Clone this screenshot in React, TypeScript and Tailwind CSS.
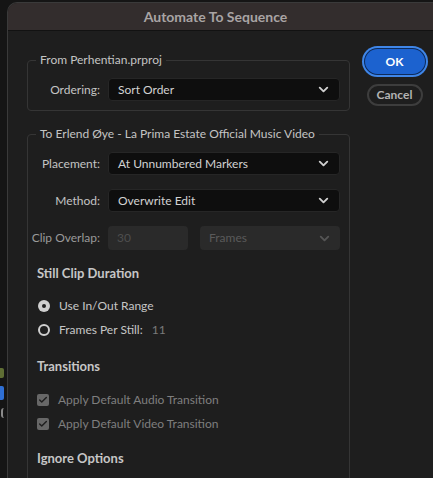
import { ChevronDown, Check } from 'lucide-react';

const font = { fontFamily: 'Lato, "Open Sans", sans-serif' };

interface SelectProps {
  value: string;
  disabled?: boolean;
  className?: string;
}

const Select = ({ value, disabled, className = '' }: SelectProps) => (
  <div
    className={`h-[23px] flex items-center justify-between rounded-[4px] pl-[9px] pr-[8px] text-[12px] ${
      disabled
        ? 'bg-[#2a2a2a] text-[#5a5a5a]'
        : 'bg-[#0e0e0e] border border-[#262626] text-[#d2d2d2]'
    } ${className}`}
  >
    <span>{value}</span>
    <ChevronDown size={15} strokeWidth={3} className={disabled ? 'text-[#555]' : 'text-[#cfcfcf]'} />
  </div>
);

const Row = ({ label, children, dim }: { label: string; children: React.ReactNode; dim?: boolean }) => (
  <div className="flex items-center">
    <div className={`w-[72px] shrink-0 text-right text-[12px] ${dim ? 'text-[#9a9a9a]' : 'text-[#c4c4c4]'}`}>{label}</div>
    <div className="flex-1 ml-[8px] flex gap-[12px]">{children}</div>
  </div>
);

const Radio = ({ checked, label, extra }: { checked?: boolean; label: string; extra?: string }) => (
  <div className="flex items-center h-[16px]">
    {checked ? (
      <span className="w-[12px] h-[12px] rounded-full bg-[#cfcfcf] flex items-center justify-center">
        <span className="w-[4px] h-[4px] rounded-full bg-[#1e1e1e]" />
      </span>
    ) : (
      <span className="w-[12px] h-[12px] rounded-full border-[2.5px] border-[#cfcfcf]" />
    )}
    <span className="ml-[9px] text-[12px] text-[#c6c6c6]">{label}</span>
    {extra && <span className="ml-[9px] text-[12px] text-[#7a7a7a]">{extra}</span>}
  </div>
);

const Checkbox = ({ label }: { label: string }) => (
  <div className="flex items-center h-[16px]">
    <span className="w-[12px] h-[12px] rounded-[2px] bg-[#676767] flex items-center justify-center">
      <Check size={10} strokeWidth={3.5} className="text-[#1f1f1f]" />
    </span>
    <span className="ml-[9px] text-[12px] text-[#7f7f7f]">{label}</span>
  </div>
);

export default function App() {
  return (
    <div className="w-[433px] h-[478px] bg-[#151515] overflow-hidden flex" style={font}>
      {/* app behind the dialog */}
      <div className="w-[7px] shrink-0 flex flex-col">
        <div className="h-[368px]" />
        <div className="w-[4px] h-[10px] bg-[#5f6e34] rounded-r-[2px]" />
        <div className="h-[8px]" />
        <div className="w-[4px] h-[14px] bg-[#2f6fd4] rounded-r-[2px]" />
        <div className="h-[8px]" />
        <div className="w-[3px] h-[10px] border-l-2 border-[#8a8a8a] rounded-l-full ml-[1px]" />
      </div>

      {/* dialog */}
      <div className="flex-1 mt-[2px] rounded-tl-[10px] border-l border-t border-[#3a3a3a] bg-[#1e1e1e] flex flex-col overflow-hidden">
        <div className="h-[28px] shrink-0 bg-[#332d2d] border-b border-[#121212] flex items-center justify-center pr-[10px]">
          <span className="text-[14px] font-bold text-[#a9a4a4]">Automate To Sequence</span>
        </div>

        <div className="flex pl-[19px]">
          <div className="w-[323px] shrink-0 flex flex-col pt-[21px]">
            <fieldset className="border border-[#353535] rounded-[4px] pl-0 pr-[9px] pt-[10px] pb-[9px]">
              <legend className="ml-[8px] px-[4px] text-[12px] text-[#c4c4c4] leading-[16px]">From Perhentian.prproj</legend>
              <Row label="Ordering:">
                <Select value="Sort Order" className="flex-1" />
              </Row>
            </fieldset>

            <fieldset className="mt-[15px] border border-[#353535] rounded-[4px] pl-0 pr-[9px] pt-[10px] pb-[40px]">
              <legend className="ml-[8px] px-[4px] text-[12px] text-[#c4c4c4] leading-[16px]">
                To Erlend Øye - La Prima Estate Official Music Video
              </legend>
              <div className="flex flex-col gap-[14px]">
                <Row label="Placement:">
                  <Select value="At Unnumbered Markers" className="flex-1" />
                </Row>
                <Row label="Method:">
                  <Select value="Overwrite Edit" className="flex-1" />
                </Row>
                <Row label="Clip Overlap:" dim>
                  <div className="w-[80px] h-[24px] rounded-[4px] bg-[#2a2a2a] text-[12px] text-[#4e4e4e] flex items-center pl-[9px]">30</div>
                  <Select value="Frames" disabled className="flex-1 h-[24px]" />
                </Row>
              </div>

              <div className="pl-[9px]">
                <div className="mt-[14px] text-[13px] font-bold text-[#c6c6c6] leading-[18px]">Still Clip Duration</div>
                <div className="mt-[16px] flex flex-col gap-[8px] pl-[1px]">
                  <Radio checked label="Use In/Out Range" />
                  <Radio label="Frames Per Still:" extra="11" />
                </div>

                <div className="mt-[19px] text-[13px] font-bold text-[#c6c6c6] leading-[18px]">Transitions</div>
                <div className="mt-[17px] flex flex-col gap-[8px]">
                  <Checkbox label="Apply Default Audio Transition" />
                  <Checkbox label="Apply Default Video Transition" />
                </div>

                <div className="mt-[17px] text-[13px] font-bold text-[#c6c6c6] leading-[18px]">Ignore Options</div>
              </div>
            </fieldset>
          </div>

          <div className="flex flex-col items-center pt-[18px] pl-[13px] w-[76px]">
            <button className="w-[60px] h-[25px] rounded-full bg-[#1c62cf] text-white text-[12px] font-bold ring-2 ring-[#3f86e8] ring-offset-1 ring-offset-[#0d2a5a]">
              OK
            </button>
            <button className="mt-[10px] w-[56px] h-[22px] rounded-full border-2 border-[#3d3d3d] text-[#b3b3b3] text-[12px] font-bold leading-none">
              Cancel
            </button>
          </div>
        </div>
      </div>
    </div>
  );
}
